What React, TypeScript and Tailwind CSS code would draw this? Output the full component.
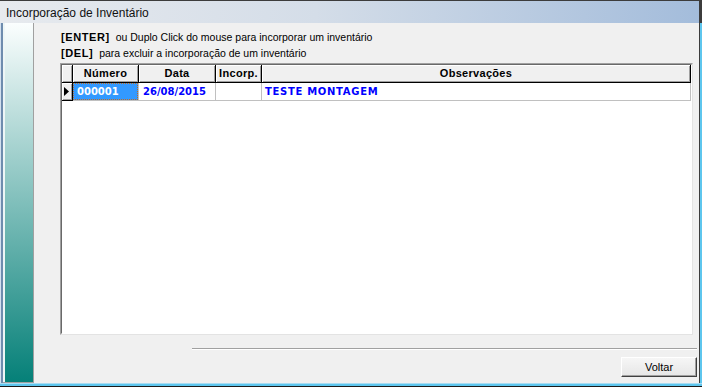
import React from "react";

const cols = [
  { label: "Número", w: "w-[66px]" },
  { label: "Data", w: "w-[77px]" },
  { label: "Incorp.", w: "w-[46px]" },
  { label: "Observações", w: "flex-1" },
];

export default function App() {
  return (
    <div className="w-[702px] h-[387px] flex flex-col bg-[#f0f0f0] overflow-hidden" style={{ fontFamily: '"Liberation Sans", Arial, sans-serif' }}>
      {/* Title bar */}
      <div className="h-[23px] shrink-0 flex border-t border-t-[#3c3c3c] bg-[linear-gradient(to_right,#e7eaee_0%,#d4dde8_45%,#a3bcdb_100%)]">
        <div className="flex-1 flex items-center pl-[6px] pt-[1px] text-[12px] text-[#111]">
          Incorporação de Inventário
        </div>
        <div className="w-[3px] bg-[#3c3c3c]" />
      </div>

      {/* Body */}
      <div className="flex-1 flex min-h-0">
        {/* left window border */}
        <div className="w-[3px] flex shrink-0">
          <div className="w-[1px] bg-[#d3e0ee]" />
          <div className="w-[2px] bg-[#6e8cae]" />
        </div>
        {/* side gradient bar */}
        <div className="w-[31px] shrink-0 flex border-r border-r-[#a0a0a0] border-b border-b-[#a0a0a0]">
          <div className="w-[2px] bg-[#eef6f6]" />
          <div className="flex-1 bg-[linear-gradient(to_bottom,#fbfefe_0%,#058078_100%)]" />
        </div>

        {/* content */}
        <div className="flex-1 flex flex-col min-w-0">
          <div className="pt-[6px] pl-[27px] text-[10.5px] leading-[16px] text-black">
            <div>
              <span className="font-bold text-[11px] tracking-[0.6px]">[ENTER]</span>&nbsp; ou Duplo Click do mouse para incorporar um inventário
            </div>
            <div>
              <span className="font-bold text-[11px] tracking-[0.6px]">[DEL]</span>&nbsp; para excluir a incorporação de um inventário
            </div>
          </div>

          {/* grid */}
          <div className="mt-[2px] ml-[26px] w-[633px] h-[272px] border border-t-[#a0a0a0] border-l-[#a0a0a0] border-r-[#e3e3e3] border-b-[#e3e3e3]">
            <div className="w-full h-full bg-white border border-t-[#696969] border-l-[#696969] border-r-white border-b-white flex flex-col">
              {/* header */}
              <div className="flex h-[18px] text-[11px] font-bold text-black">
                <div className="w-[11px] bg-[#f0f0f0] border-r border-b border-black shadow-[inset_1px_1px_0_#fff,inset_-1px_-1px_0_#a0a0a0]" />
                {cols.map((c) => (
                  <div
                    key={c.label}
                    className={`${c.w} bg-[#f0f0f0] border-r border-b border-black shadow-[inset_1px_1px_0_#fff,inset_-1px_-1px_0_#a0a0a0] flex items-center justify-center leading-none tracking-[0.3px]`}
                  >
                    {c.label}
                  </div>
                ))}
              </div>
              {/* data row */}
              <div className="flex h-[18px] text-[10px] font-bold text-[#0000ff]" style={{ fontFamily: '"DejaVu Sans", sans-serif' }}>
                <div className="w-[11px] bg-[#f0f0f0] border-r border-b border-black shadow-[inset_1px_1px_0_#fff,inset_-1px_-1px_0_#a0a0a0] flex items-center pl-[2px]">
                  <svg width="5" height="9" viewBox="0 0 5 9">
                    <path d="M0 0 L5 4.5 L0 9 Z" fill="#000" />
                  </svg>
                </div>
                <div className="w-[66px] border-r border-b border-[#c0c0c0] flex">
                  <div className="flex-1 bg-[#3399ff] text-white border border-dotted border-[#c06a20] flex items-center pl-[3px] leading-none">
                    000001
                  </div>
                </div>
                <div className="w-[77px] border-r border-b border-[#c0c0c0] flex items-center pl-[4px] leading-none">
                  26/08/2015
                </div>
                <div className="w-[46px] border-r border-b border-[#c0c0c0]" />
                <div className="flex-1 border-r border-b border-[#c0c0c0] flex items-center pl-[3px] leading-none tracking-[0.7px]">
                  TESTE MONTAGEM
                </div>
              </div>
            </div>
          </div>

          {/* separator */}
          <div className="mt-[13px] ml-[158px] mr-[2px] h-[2px] border-t border-t-[#a0a0a0] border-b border-b-white" />

          {/* button row */}
          <div className="flex justify-end mt-[7px] mr-[2px]">
            <button className="w-[76px] h-[20px] text-[11px] text-black bg-[linear-gradient(to_bottom,#f6f6f6,#e6e6e6)] border border-t-white border-l-white border-r-[#404040] border-b-[#404040] shadow-[inset_-1px_-1px_0_#a0a0a0] flex items-center justify-center">
              Voltar
            </button>
          </div>
        </div>

        {/* right border */}
        <div className="w-[3px] flex shrink-0">
          <div className="w-[1px] bg-[#3c3c3c]" />
          <div className="w-[2px] bg-[#5ec6ee]" />
        </div>
      </div>

      {/* bottom border */}
      <div className="h-[4px] shrink-0 flex flex-col">
        <div className="h-[1px] bg-[#a8dcf2]" />
        <div className="h-[2px] bg-[#5ec6ee]" />
        <div className="h-[1px] bg-[#1a1a1a]" />
      </div>
    </div>
  );
}
